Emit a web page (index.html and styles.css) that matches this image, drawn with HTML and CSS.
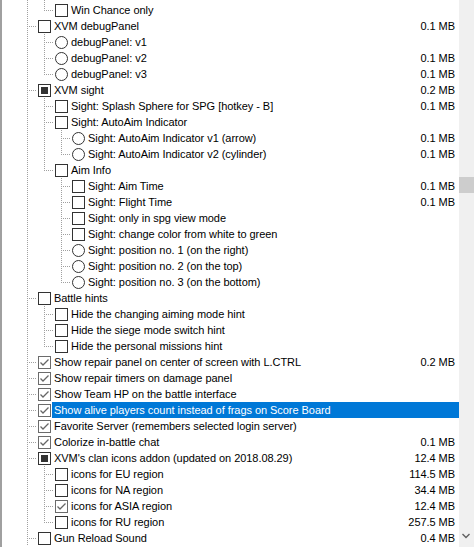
FILE: index.html
```html
<!DOCTYPE html>
<html>
<head>
<meta charset="utf-8">
<link rel="stylesheet" href="styles.css">
</head>
<body>
<div class="window">
  <div class="list">
    <div class="spacer"><span class="cell c"></span><span class="cell c"></span></div>

    <div class="row"><span class="cell c"></span><span class="cell l"></span><span class="box"></span><div class="item"><span class="label">Win Chance only</span><span class="size"></span></div></div>
    <div class="row"><span class="cell t"></span><span class="box"></span><div class="item"><span class="label">XVM debugPanel</span><span class="size">0.1 MB</span></div></div>
    <div class="row"><span class="cell c"></span><span class="cell t"></span><span class="radio"></span><div class="item"><span class="label">debugPanel: v1</span><span class="size"></span></div></div>
    <div class="row"><span class="cell c"></span><span class="cell t"></span><span class="radio"></span><div class="item"><span class="label">debugPanel: v2</span><span class="size">0.1 MB</span></div></div>
    <div class="row"><span class="cell c"></span><span class="cell l"></span><span class="radio"></span><div class="item"><span class="label">debugPanel: v3</span><span class="size">0.1 MB</span></div></div>
    <div class="row"><span class="cell t"></span><span class="box partial"></span><div class="item"><span class="label">XVM sight</span><span class="size">0.2 MB</span></div></div>
    <div class="row"><span class="cell c"></span><span class="cell t"></span><span class="box"></span><div class="item"><span class="label">Sight: Splash Sphere for SPG [hotkey - B]</span><span class="size">0.1 MB</span></div></div>
    <div class="row"><span class="cell c"></span><span class="cell t"></span><span class="box"></span><div class="item"><span class="label">Sight: AutoAim Indicator</span><span class="size"></span></div></div>
    <div class="row"><span class="cell c"></span><span class="cell c"></span><span class="cell t"></span><span class="radio"></span><div class="item"><span class="label">Sight: AutoAim Indicator v1 (arrow)</span><span class="size">0.1 MB</span></div></div>
    <div class="row"><span class="cell c"></span><span class="cell c"></span><span class="cell l"></span><span class="radio"></span><div class="item"><span class="label">Sight: AutoAim Indicator v2 (cylinder)</span><span class="size">0.1 MB</span></div></div>
    <div class="row"><span class="cell c"></span><span class="cell l"></span><span class="box"></span><div class="item"><span class="label">Aim Info</span><span class="size"></span></div></div>
    <div class="row"><span class="cell c"></span><span class="cell e"></span><span class="cell t"></span><span class="box"></span><div class="item"><span class="label">Sight: Aim Time</span><span class="size">0.1 MB</span></div></div>
    <div class="row"><span class="cell c"></span><span class="cell e"></span><span class="cell t"></span><span class="box"></span><div class="item"><span class="label">Sight: Flight Time</span><span class="size">0.1 MB</span></div></div>
    <div class="row"><span class="cell c"></span><span class="cell e"></span><span class="cell t"></span><span class="box"></span><div class="item"><span class="label">Sight: only in spg view mode</span><span class="size"></span></div></div>
    <div class="row"><span class="cell c"></span><span class="cell e"></span><span class="cell t"></span><span class="box"></span><div class="item"><span class="label">Sight: change color from white to green</span><span class="size"></span></div></div>
    <div class="row"><span class="cell c"></span><span class="cell e"></span><span class="cell t"></span><span class="radio"></span><div class="item"><span class="label">Sight: position no. 1 (on the right)</span><span class="size"></span></div></div>
    <div class="row"><span class="cell c"></span><span class="cell e"></span><span class="cell t"></span><span class="radio"></span><div class="item"><span class="label">Sight: position no. 2 (on the top)</span><span class="size"></span></div></div>
    <div class="row"><span class="cell c"></span><span class="cell e"></span><span class="cell l"></span><span class="radio"></span><div class="item"><span class="label">Sight: position no. 3 (on the bottom)</span><span class="size"></span></div></div>
    <div class="row"><span class="cell t"></span><span class="box"></span><div class="item"><span class="label">Battle hints</span><span class="size"></span></div></div>
    <div class="row"><span class="cell c"></span><span class="cell t"></span><span class="box"></span><div class="item"><span class="label">Hide the changing aiming mode hint</span><span class="size"></span></div></div>
    <div class="row"><span class="cell c"></span><span class="cell t"></span><span class="box"></span><div class="item"><span class="label">Hide the siege mode switch hint</span><span class="size"></span></div></div>
    <div class="row"><span class="cell c"></span><span class="cell l"></span><span class="box"></span><div class="item"><span class="label">Hide the personal missions hint</span><span class="size"></span></div></div>
    <div class="row"><span class="cell t"></span><span class="box checked"><svg viewBox="0 0 13 13"><path d="M2.5 6.5 L5 9 L10.5 3.5"/></svg></span><div class="item"><span class="label">Show repair panel on center of screen with L.CTRL</span><span class="size">0.2 MB</span></div></div>
    <div class="row"><span class="cell t"></span><span class="box checked"><svg viewBox="0 0 13 13"><path d="M2.5 6.5 L5 9 L10.5 3.5"/></svg></span><div class="item"><span class="label">Show repair timers on damage panel</span><span class="size"></span></div></div>
    <div class="row"><span class="cell t"></span><span class="box checked"><svg viewBox="0 0 13 13"><path d="M2.5 6.5 L5 9 L10.5 3.5"/></svg></span><div class="item"><span class="label">Show Team HP on the battle interface</span><span class="size"></span></div></div>
    <div class="row"><span class="cell t"></span><span class="box checked"><svg viewBox="0 0 13 13"><path d="M2.5 6.5 L5 9 L10.5 3.5"/></svg></span><div class="item selected"><span class="label">Show alive players count instead of frags on Score Board</span><span class="size"></span></div></div>
    <div class="row"><span class="cell t"></span><span class="box checked"><svg viewBox="0 0 13 13"><path d="M2.5 6.5 L5 9 L10.5 3.5"/></svg></span><div class="item"><span class="label">Favorite Server (remembers selected login server)</span><span class="size"></span></div></div>
    <div class="row"><span class="cell t"></span><span class="box checked"><svg viewBox="0 0 13 13"><path d="M2.5 6.5 L5 9 L10.5 3.5"/></svg></span><div class="item"><span class="label">Colorize in-battle chat</span><span class="size">0.1 MB</span></div></div>
    <div class="row"><span class="cell t"></span><span class="box partial"></span><div class="item"><span class="label">XVM's clan icons addon (updated on 2018.08.29)</span><span class="size">12.4 MB</span></div></div>
    <div class="row"><span class="cell c"></span><span class="cell t"></span><span class="box"></span><div class="item"><span class="label">icons for EU region</span><span class="size">114.5 MB</span></div></div>
    <div class="row"><span class="cell c"></span><span class="cell t"></span><span class="box"></span><div class="item"><span class="label">icons for NA region</span><span class="size">34.4 MB</span></div></div>
    <div class="row"><span class="cell c"></span><span class="cell t"></span><span class="box checked"><svg viewBox="0 0 13 13"><path d="M2.5 6.5 L5 9 L10.5 3.5"/></svg></span><div class="item"><span class="label">icons for ASIA region</span><span class="size">12.4 MB</span></div></div>
    <div class="row"><span class="cell c"></span><span class="cell l"></span><span class="box"></span><div class="item"><span class="label">icons for RU region</span><span class="size">257.5 MB</span></div></div>
    <div class="row"><span class="cell t"></span><span class="box"></span><div class="item"><span class="label">Gun Reload Sound</span><span class="size">0.4 MB</span></div></div>
  </div>
  <div class="scrollbar">
    <div class="thumb"></div>
    <div class="arrow"><svg viewBox="0 0 8 6"><path d="M0.5 1 L4 4.5 L7.5 1"/></svg></div>
  </div>
</div>
</body>
</html>
```

FILE: styles.css
```css
html, body {
  margin: 0;
  padding: 0;
  background: #ffffff;
}

.window {
  width: 474px;
  height: 547px;
  display: flex;
  overflow: hidden;
  font-family: "Liberation Sans", Arial, sans-serif;
  font-size: 11px;
  letter-spacing: -0.05px;
  color: #000000;
}

.list {
  border-left: 2px solid #a0a0a0;
  padding-left: 17px;
  box-sizing: content-box;
  display: flex;
  flex-direction: column;
  flex: none;
  width: 440px;
}

.spacer {
  height: 2px;
  display: flex;
  overflow: hidden;
}

.row {
  height: 16px;
  display: flex;
  align-items: center;
  flex: none;
}

.cell {
  width: 17px;
  height: 16px;
  flex: none;
  background-repeat: no-repeat;
}

.cell.c {
  background-image: repeating-linear-gradient(to bottom, #a0a0a0 0 1px, transparent 1px 2px);
  background-position: 8px 0;
  background-size: 1px 16px;
}

.cell.t {
  background-image:
    repeating-linear-gradient(to bottom, #a0a0a0 0 1px, transparent 1px 2px),
    repeating-linear-gradient(to right, #a0a0a0 0 1px, transparent 1px 2px);
  background-position: 8px 0, 10px 8px;
  background-size: 1px 16px, 8px 1px;
}

.cell.l {
  background-image:
    repeating-linear-gradient(to bottom, #a0a0a0 0 1px, transparent 1px 2px),
    repeating-linear-gradient(to right, #a0a0a0 0 1px, transparent 1px 2px);
  background-position: 8px 0, 10px 8px;
  background-size: 1px 9px, 8px 1px;
}

.box, .radio {
  width: 13px;
  height: 13px;
  box-sizing: border-box;
  border: 1px solid #333333;
  background: #ffffff;
  margin-left: 2px;
  flex: none;
  display: flex;
  align-items: center;
  justify-content: center;
}

.radio {
  border-radius: 50%;
}

.box.partial::after {
  content: "";
  width: 7px;
  height: 7px;
  background: #333333;
}

.box.checked {
  border-color: #6b6b6b;
}

.box.checked svg {
  width: 13px;
  height: 13px;
  flex: none;
  margin: -1px;
}

.box.checked path {
  fill: none;
  stroke: #666666;
  stroke-width: 1.3;
}

.item {
  flex: 1;
  height: 16px;
  margin-left: 1px;
  padding-left: 2px;
  padding-right: 4px;
  display: flex;
  align-items: center;
  justify-content: space-between;
  white-space: nowrap;
  line-height: 16px;
}

.item.selected {
  background: #0078d7;
  color: #ffffff;
}

.size {
  text-align: right;
}

.scrollbar {
  flex: 1;
  background: #f0f0f0;
  display: flex;
  flex-direction: column;
}

.thumb {
  margin-top: 177px;
  height: 16px;
  background: #cdcdcd;
}

.arrow {
  margin-top: auto;
  height: 14px;
  display: flex;
  justify-content: center;
  align-items: flex-start;
  padding-right: 1px;
}

.arrow svg {
  width: 8px;
  height: 6px;
}

.arrow path {
  fill: none;
  stroke: #606060;
  stroke-width: 1.4;
}
```
